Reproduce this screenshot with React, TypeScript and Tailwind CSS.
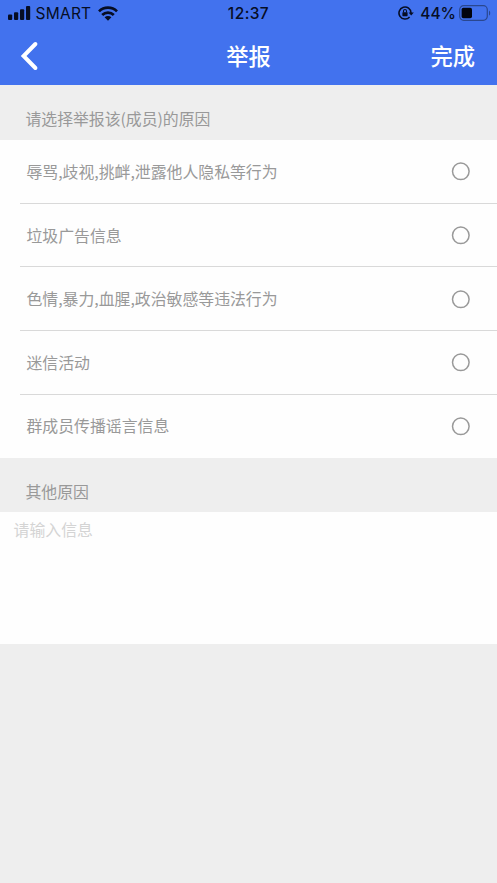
const reasons = [
  "辱骂,歧视,挑衅,泄露他人隐私等行为",
  "垃圾广告信息",
  "色情,暴力,血腥,政治敏感等违法行为",
  "迷信活动",
  "群成员传播谣言信息",
];

function StatusBar() {
  return (
    <div className="grid h-[27px] grid-cols-[1fr_auto_1fr] items-center font-['Inter',sans-serif] text-[15.5px] font-medium leading-none text-[#060d24]">
      <div className="flex items-center pl-2">
        <svg className="-mt-px" width="23" height="14" viewBox="0 0 23 14" fill="currentColor">
          <rect x="0" y="8.6" width="4.2" height="5.4" rx="1" />
          <rect x="6" y="6.2" width="4.2" height="7.8" rx="1" />
          <rect x="12" y="3.2" width="4.2" height="10.8" rx="1" />
          <rect x="18" y="0" width="4.2" height="14" rx="1" />
        </svg>
        <span className="ml-[4.5px] w-[56px] whitespace-nowrap font-normal tracking-[0.25px]">SMART</span>
        <svg className="ml-[6.5px]" width="20" height="15" viewBox="0 0 20 15" fill="none" stroke="currentColor" strokeWidth="2.7">
          <path d="M1 5.4a12.8 12.8 0 0 1 18 0" />
          <path d="M4.2 9a8.2 8.2 0 0 1 11.6 0" />
          <path d="M6.6 11.3a4.8 4.8 0 0 1 6.8 0L10 14.7Z" fill="currentColor" stroke="none" />
        </svg>
      </div>
      <span className="tracking-[0.4px]">12:37</span>
      <div className="flex items-center justify-end pr-[6px]">
        <svg className="-mt-px" width="16" height="14" viewBox="0 0 16 14" fill="none" stroke="currentColor" strokeWidth="1.6">
          <path d="M11.6 10.9A6 6 0 1 1 13 7" />
          <path d="M10.6 6.4h5.2l-2.6 3.2Z" fill="currentColor" stroke="none" />
          <rect x="4.4" y="6.2" width="5.2" height="4" rx="0.6" fill="currentColor" stroke="none" />
          <path d="M5.5 6.4V5a1.5 1.5 0 0 1 3 0v1.4" strokeWidth="1.1" />
        </svg>
        <span className="ml-[6px] whitespace-nowrap">44%</span>
        <svg className="-mt-px ml-[3px]" width="32" height="16" viewBox="0 0 32 16">
          <rect x="0.7" y="0.7" width="27.6" height="14.6" rx="4" fill="none" stroke="#2a478f" strokeWidth="1.2" />
          <rect x="2.6" y="2.8" width="10.4" height="10.4" rx="1.8" fill="#02040c" />
          <path d="M30 5.4c1.6.8 1.6 4.4 0 5.2Z" fill="#2a478f" />
        </svg>
      </div>
    </div>
  );
}

function SectionTitle({ children }: { children: string }) {
  return <h2 className="pl-[25.5px] leading-6 tracking-[-0.05px]">{children}</h2>;
}

export default function App() {
  return (
    <div className="flex h-[883px] w-full flex-col overflow-hidden bg-[#eeeeee] font-['Noto_Sans_CJK_SC',sans-serif] text-[15.9px] text-[#999999]">
      <header className="h-[84.5px] shrink-0 bg-[#4272ee]">
        <StatusBar />
        <div className="grid h-[57px] grid-cols-3 items-center text-[22.3px] font-medium text-white">
          <button className="pl-5" aria-label="返回">
            <svg width="20" height="30" viewBox="0 0 20 30" fill="none" stroke="currentColor" strokeWidth="4" strokeLinecap="round" strokeLinejoin="miter">
              <path d="M15.4 3 3.6 15l11.8 12" />
            </svg>
          </button>
          <h1 className="text-center">举报</h1>
          <button className="pr-[22px] text-right">完成</button>
        </div>
      </header>

      <div className="h-[55.5px] shrink-0 pt-[22.5px]">
        <SectionTitle>请选择举报该(成员)的原因</SectionTitle>
      </div>

      <ul className="h-[318.2px] shrink-0 bg-[#fefefe] pl-5">
        {reasons.map((reason) => (
          <li
            key={reason}
            className="flex h-[63.64px] items-center justify-between border-b border-[#d9d9d9] pl-[6.5px] pr-[27px] pt-px last:border-b-0 last:pt-0"
          >
            <span className="tracking-[-0.03px]">{reason}</span>
            <svg width="19" height="19" viewBox="0 0 19 19" fill="none" stroke="#999999" strokeWidth="1.5">
              <circle cx="9.8" cy="9.3" r="8.3" />
            </svg>
          </li>
        ))}
      </ul>

      <div className="h-[54.3px] shrink-0 pt-[22px]">
        <SectionTitle>其他原因</SectionTitle>
      </div>
      <textarea
        className="block h-[132px] w-full shrink-0 resize-none bg-[#fefefe] px-[13.5px] pt-[6px] leading-6 outline-none placeholder:text-[#d4d4d4]"
        placeholder="请输入信息"
      />
    </div>
  );
}
